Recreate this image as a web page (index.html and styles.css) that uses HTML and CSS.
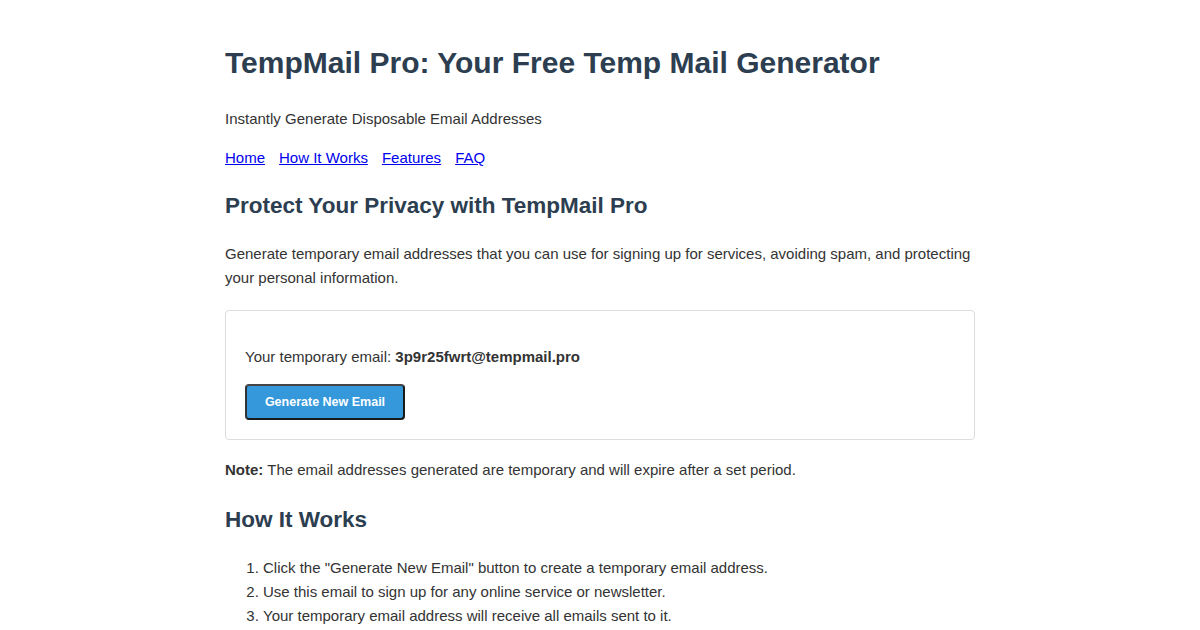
FILE: index.html
```html
<!DOCTYPE html>
<html lang="en">
<head>
<meta charset="utf-8">
<title>TempMail Pro: Your Free Temp Mail Generator</title>
<link rel="stylesheet" href="styles.css">
</head>
<body>
<div class="container">
  <header>
    <h1>TempMail Pro: Your Free Temp Mail Generator</h1>
    <p>Instantly Generate Disposable Email Addresses</p>
    <nav class="nav">
      <a href="#">Home</a>
      <a href="#how">How It Works</a>
      <a href="#features">Features</a>
      <a href="#faq">FAQ</a>
    </nav>
  </header>
  <main>
    <section class="intro">
      <h2>Protect Your Privacy with TempMail Pro</h2>
      <p>Generate temporary email addresses that you can use for signing up for services, avoiding spam, and protecting your personal information.</p>
      <div class="email-box">
        <p>Your temporary email: <strong>3p9r25fwrt@tempmail.pro</strong></p>
        <button class="btn">Generate New Email</button>
      </div>
      <p><strong>Note:</strong> The email addresses generated are temporary and will expire after a set period.</p>
    </section>
    <section id="how" class="how">
      <h2>How It Works</h2>
      <ol>
        <li>Click the "Generate New Email" button to create a temporary email address.</li>
        <li>Use this email to sign up for any online service or newsletter.</li>
        <li>Your temporary email address will receive all emails sent to it.</li>
      </ol>
    </section>
  </main>
</div>
</body>
</html>
```

FILE: styles.css
```css
body {
  margin: 0;
  padding: 20px;
  font-family: "Liberation Sans", Arial, sans-serif;
  font-size: 15px;
  line-height: 1.6;
  color: #333;
  background: #fff;
}
.container {
  max-width: 750px;
  margin: 0 auto;
}
h1 {
  font-size: 30px;
  line-height: 1.2;
  color: #2c3e50;
  margin: 25px 0 26px;
}
h2 {
  font-size: 22.5px;
  line-height: 1.2;
  color: #2c3e50;
  margin: 22px 0 23px;
}
.how h2 {
  margin-top: 24px;
}
p {
  margin: 15px 0;
}
.nav {
  display: flex;
  gap: 14px;
  margin: 15px 0 13px;
}
.nav a {
  color: #0000ee;
  text-decoration: underline;
}
.email-box {
  border: 1px solid #ddd;
  border-radius: 4px;
  padding: 19px 19px 19px;
  margin: 20px 0 18px;
}
.btn {
  display: block;
  background: #3498db;
  color: #fff;
  font-family: "Liberation Sans", Arial, sans-serif;
  font-weight: bold;
  font-size: 12.5px;
  padding: 0;
  height: 36px;
  width: 160px;
  border: 2px solid #1a1a1a;
  border-top-color: #444;
  border-left-color: #333;
  border-radius: 4px;
}
ol {
  margin: 16px 0;
  padding-left: 38px;
}
li {
  margin: 0;
}
```
